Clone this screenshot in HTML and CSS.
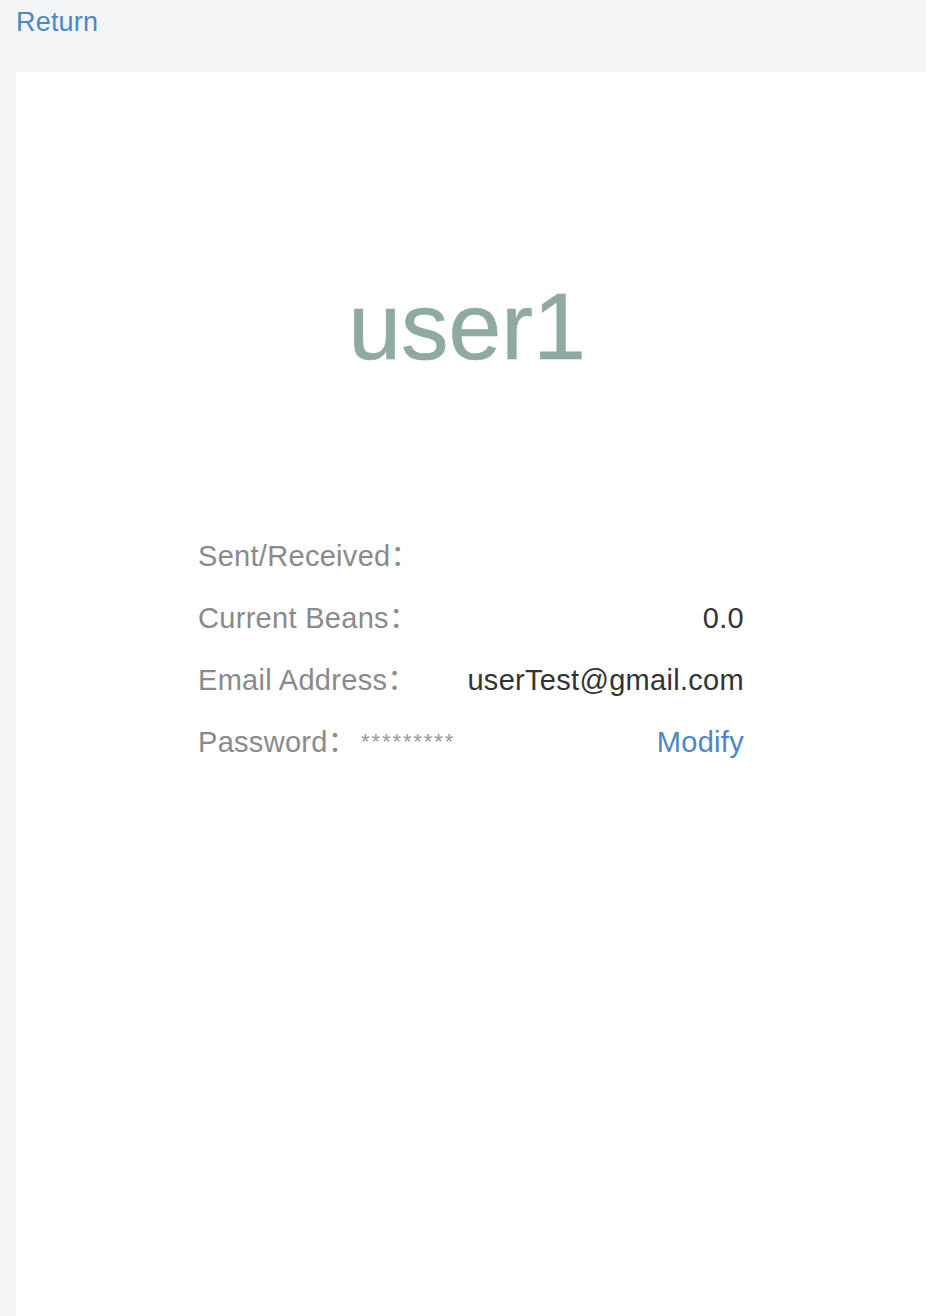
FILE: index.html
```html
<!DOCTYPE html>
<html lang="en">
<head>
<meta charset="utf-8">
<title>user1</title>
<link rel="stylesheet" href="styles.css">
</head>
<body>
<header class="topbar">
  <a class="return-link" href="#">Return</a>
</header>
<main class="card">
  <h1 class="username">user1</h1>
  <section class="info">
    <div class="row">
      <span class="label">Sent/Received：</span>
      <span class="value"></span>
    </div>
    <div class="row">
      <span class="label">Current Beans：</span>
      <span class="value">0.0</span>
    </div>
    <div class="row">
      <span class="label">Email Address：</span>
      <span class="value">userTest@gmail.com</span>
    </div>
    <div class="row">
      <span class="left"><span class="label">Password：</span><span class="mask">*********</span></span>
      <a class="modify" href="#">Modify</a>
    </div>
  </section>
</main>
</body>
</html>
```

FILE: styles.css
```css
html, body {
  margin: 0;
  padding: 0;
}
body {
  background: #f3f4f6;
  font-family: "Liberation Sans", Arial, "Noto Sans CJK SC", sans-serif;
  overflow: hidden;
}
.topbar {
  height: 72px;
  box-sizing: border-box;
  padding: 9px 16px 0;
}
.return-link {
  display: block;
  font-size: 27px;
  line-height: 27px;
  letter-spacing: 0.2px;
  color: #4a87c7;
  text-decoration: none;
}
.card {
  margin-left: 16px;
  background: #ffffff;
  height: 1244px;
  padding-top: 207px;
  box-sizing: border-box;
}
.username {
  margin: 0;
  padding-right: 8px;
  text-align: center;
  font-weight: normal;
  font-size: 95px;
  line-height: 95px;
  color: #8faa9e;
  -webkit-text-stroke: 0.6px #8faa9e;
}
.info {
  width: 546px;
  margin: 151px auto 0;
}
.row {
  display: flex;
  justify-content: space-between;
  align-items: baseline;
  height: 62px;
  line-height: 62px;
  font-size: 29px;
  letter-spacing: 0.3px;
}
.label {
  color: #8a8a8a;
}
.value {
  color: #333333;
}
.left {
  display: block;
}
.mask {
  font-size: 22px;
  line-height: 1;
  color: #999999;
  letter-spacing: 1.9px;
  margin-left: 4px;
  vertical-align: 3px;
}
.modify {
  color: #4a87c7;
  text-decoration: none;
}
```
